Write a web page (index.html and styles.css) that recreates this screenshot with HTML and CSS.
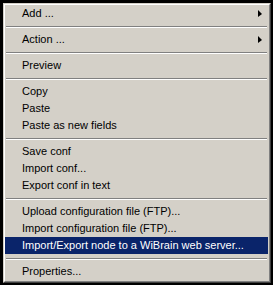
FILE: index.html
```html
<!DOCTYPE html>
<html lang="en">
<head>
  <meta charset="UTF-8">
  <title>Node context menu</title>
  <link rel="stylesheet" href="styles.css">
</head>
<body>

  <!-- Context menu (classic look) -->
  <div class="menu">
    <div class="menu-inner">
      <div class="item has-sub">Add ...<span class="arrow"></span></div>
      <div class="sep"></div>
      <div class="item has-sub">Action ...<span class="arrow"></span></div>
      <div class="sep"></div>
      <div class="item">Preview</div>
      <div class="sep"></div>
      <div class="item">Copy</div>
      <div class="item">Paste</div>
      <div class="item">Paste as new fields</div>
      <div class="sep"></div>
      <div class="item">Save conf</div>
      <div class="item">Import conf...</div>
      <div class="item">Export conf in text</div>
      <div class="sep"></div>
      <div class="item">Upload configuration file (FTP)...</div>
      <div class="item">Import configuration file (FTP)...</div>
      <div class="item selected">Import/Export node to a WiBrain web server...</div>
      <div class="sep"></div>
      <div class="item">Properties...</div>
    </div>
  </div>

</body>
</html>
```

FILE: styles.css
```css
body {
  margin: 0;
  padding: 3px;
  background: #000;
  font-family: "Liberation Sans", Arial, sans-serif;
  font-size: 11px;
}

/* outer 3d frame */
.menu {
  width: 266px;
  border: 1px solid;
  border-color: #d4d0c8 #404040 #404040 #d4d0c8;
  background: #d4d0c8;
}

/* inner 3d frame */
.menu-inner {
  border: 1px solid;
  border-color: #fff #808080 #808080 #fff;
  padding: 0 1px 1px 0;
}

.item {
  display: flex;
  align-items: center;
  height: 17px;
  padding-left: 17px;
  padding-bottom: 1px;
  box-sizing: border-box;
  color: #000;
  white-space: nowrap;
}

.item.selected {
  background: #0a246a;
  color: #fff;
}

/* submenu triangle */
.arrow {
  margin-left: auto;
  margin-right: 6px;
  width: 0;
  height: 0;
  border-top: 4px solid transparent;
  border-bottom: 3px solid transparent;
  border-left: 4px solid #000;
}

.sep {
  height: 9px;
  display: flex;
  flex-direction: column;
  justify-content: center;
  padding: 0 1px;
}

.sep::before {
  content: "";
  display: block;
  border-top: 1px solid #808080;
  border-bottom: 1px solid #fff;
}
```
